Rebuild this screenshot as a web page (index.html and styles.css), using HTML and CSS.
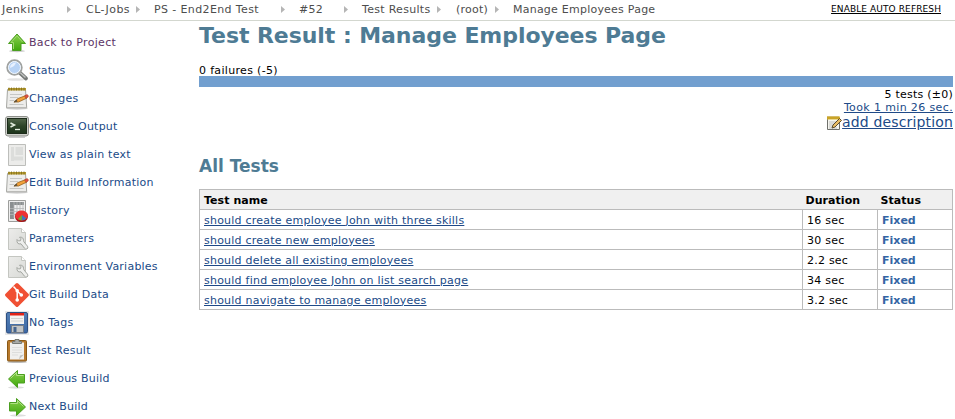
FILE: index.html
```html
<!DOCTYPE html>
<html lang="en">
<head>
<meta charset="utf-8">
<title>Test Result : Manage Employees Page</title>
<link rel="stylesheet" href="styles.css">
</head>
<body>
<svg class="defs" aria-hidden="true">
  <defs>
    <linearGradient id="green" x1="0" y1="0" x2="0" y2="1"><stop offset="0" stop-color="#8bd04e"/><stop offset="1" stop-color="#3fa80c"/></linearGradient>
    <linearGradient id="paper" x1="0" y1="0" x2="1" y2="1"><stop offset="0" stop-color="#ececea"/><stop offset="1" stop-color="#d9dad7"/></linearGradient>
    <linearGradient id="screen" x1="0" y1="0" x2="0" y2="1"><stop offset="0" stop-color="#52664a"/><stop offset=".5" stop-color="#2d4529"/><stop offset="1" stop-color="#1d341b"/></linearGradient>
    <linearGradient id="disk" x1="0" y1="0" x2="0" y2="1"><stop offset="0" stop-color="#547fb4"/><stop offset="1" stop-color="#3c68a5"/></linearGradient>
    <symbol id="notepad" viewBox="0 0 24 24">
      <ellipse cx="12" cy="21.500" rx="11" ry="1.200" fill="#d5d5d5"/>
      <path d="M2.500 2.500h18l1.200 18.300H1.500z" fill="#ededeb" stroke="#a5a6a2"/>
      <path d="M3 1h18v2.500H3z" fill="#b59a2e"/>
      <path d="M4 .5v3M6.500 .5v3M9 .5v3M11.500 .5v3M14 .5v3M16.500 .5v3M19 .5v3" stroke="#7b691e" stroke-width=".8"/>
      <path d="M5 7.500h12M5 10.500h8M4.500 13.500h5M4.500 17.500h14" stroke="#c6c7c5"/>
      <path d="M9 15l4-3.500 8-3 1 2.500-8.500 4z" fill="#f2a13a" stroke="#966019" stroke-width=".8"/>
      <path d="M8.500 15.500l3-3 1 2z" fill="#554f40"/>
      <path d="M19.500 8.800l2.500-1.300q2 .8 1.200 2.500l-2.300 1.300z" fill="#df5042" stroke="#a83a27" stroke-width=".5"/>
    </symbol>
    <symbol id="wrench-page" viewBox="0 0 24 24">
      <path d="M3.500 1.500h13l4 4v17h-17z" fill="url(#paper)" stroke="#c4c6c1"/>
      <path d="M16.500 1.500v4h4" fill="#fff" stroke="#c4c6c1"/>
      <path d="M12 12.500l1.500 1.500 2-.3.500-2-1.500-1.500q4-.5 4 3.500 0 1 1.500 2.500l2.500 3q1 2-.5 2.800-1.500.6-2.500-.8l-3.500-4.400q-4.500 1-4-4.300z" fill="#eeefed" stroke="#9c9f9a" stroke-width=".9"/>
    </symbol>
    <symbol id="right" viewBox="0 0 24 24">
      <ellipse cx="13" cy="20.500" rx="8" ry="1.200" fill="#dedede"/>
      <path d="M4.500 7.500h7v-4l9 8.500-9 8.500v-4.500h-7z" fill="url(#green)" stroke="#4b9f20"/>
      <path d="M5.500 8.500h7v-3l6 6" fill="none" stroke="#afe083"/>
    </symbol>
  </defs>
</svg>
<header class="bar">
  <nav class="crumbs">
    <a class="c1">Jenkins</a><i></i><a class="c2">CL-Jobs</a><i></i><a class="c3">PS - End2End Test</a><i></i><a class="c4">#52</a><i></i><a class="c5">Test Results</a><i></i><a class="c6">(root)</a><i></i><a class="c7">Manage Employees Page</a>
  </nav>
  <a class="refresh">ENABLE AUTO REFRESH</a>
</header>
<div class="page">
  <nav class="tasks">
    <a class="visited"><svg viewBox="0 0 24 24"><ellipse cx="12" cy="20" rx="8" ry="1.200" fill="#ccc"/><path d="M7.500 19.500v-7h-4l8.500-9.500 8.500 9.500h-4.500v7z" fill="url(#green)" stroke="#4b9f20"/><path d="M8.500 18v-6.500H6l6-6.700 5.500 6.200" fill="none" stroke="#9fd96e"/></svg><span>Back to Project</span></a>
    <a><svg viewBox="0 0 24 24"><ellipse cx="11" cy="20.500" rx="9" ry="1.300" fill="#e2e2e2"/><path d="M14.500 13.500l6.500 6" stroke="#777a78" stroke-width="3.800" stroke-linecap="round"/><path d="M15 13.500l5.500 5" stroke="#bfc1bf" stroke-width="1.500"/><circle cx="9.500" cy="8.500" r="7.200" fill="#b5d0f2" stroke="#a0a2a0" stroke-width="2"/><circle cx="9.500" cy="8.500" r="6" fill="#b8d3f5" stroke="#f4f8fd"/><path d="M5 9q0-5 6-5.500-1 4-6 5.500" fill="#e7f1ff"/></svg><span>Status</span></a>
    <a><svg><use href="#notepad"/></svg><span>Changes</span></a>
    <a><svg viewBox="0 0 24 24"><rect x=".5" y="1.500" width="23" height="19.500" rx="2.500" fill="#cfd1cc" stroke="#8e908b"/><rect x="2.500" y="3.500" width="19" height="15" fill="url(#screen)" stroke="#1c2b1a"/><path d="M5.500 8l4 2-4 2" fill="none" stroke="#e4eee0" stroke-width="1.500"/><path d="M10 14.500h5" stroke="#e4eee0" stroke-width="1.300"/><path d="M4 22h16" stroke="#bbb" stroke-width="1.500"/></svg><span>Console Output</span></a>
    <a><svg viewBox="0 0 24 24"><path d="M3.500 1.500h17v21h-17z" fill="#ececea" stroke="#bdbebb"/><path d="M6 4h3v14H6zM10.500 4H18v8h-7.500zM8 13.500h10v4H8z" fill="#dcdddb"/></svg><span>View as plain text</span></a>
    <a><svg><use href="#notepad"/></svg><span>Edit Build Information</span></a>
    <a><svg viewBox="0 0 24 24"><path d="M3.500 1.500h17v21h-17z" fill="#eee" stroke="#9d9e9c"/><path d="M5 3h14v3H5zM5 6h4v14H5z" fill="#8b8f90"/><path d="M5 9.500h14M5 12.500h14M5 15.500h14M9 3v16M12 3v16M15 3v16M18 3v16" stroke="#b4b6b6" stroke-width=".8"/><ellipse cx="16.500" cy="17.500" rx="6.500" ry="5.500" fill="#a91515"/><ellipse cx="16.500" cy="16.500" rx="6.300" ry="4.900" fill="#e33"/><path d="M17 16l-.5 5.500q3.500 0 5-2z" fill="#4277bc"/><path d="M17 16l-.5 5.500q-2-.2-3.500-1.400z" fill="#69b62d"/></svg><span>History</span></a>
    <a><svg><use href="#wrench-page"/></svg><span>Parameters</span></a>
    <a><svg><use href="#wrench-page"/></svg><span>Environment Variables</span></a>
    <a><svg viewBox="0 0 24 24"><path d="M10.800.6q1.200-1.200 2.400 0l10.200 10.200q1.200 1.200 0 2.400L13.200 23.400q-1.200 1.200-2.400 0L.6 13.200q-1.200-1.200 0-2.400z" fill="#f05033"/><path d="M8.500 3.500l3.700 4v9.500M12.200 8l4 4" fill="none" stroke="#fff" stroke-width="1.500"/><circle cx="12.200" cy="7.700" r="1.800" fill="#fff"/><circle cx="12.200" cy="17" r="1.800" fill="#fff"/><circle cx="16.300" cy="12" r="1.800" fill="#fff"/></svg><span>Git Build Data</span></a>
    <a><svg viewBox="0 0 24 24"><rect width="24" height="24" fill="#e8e8e8"/><rect x="1.500" y="1.500" width="21" height="20.500" rx="1.500" fill="url(#disk)" stroke="#2d4f82"/><path d="M5 2h14v11H5z" fill="#f3f3f1"/><path d="M5 2h14v2.500H5z" fill="#e22317"/><path d="M6 7.500h12M6 10h12" stroke="#d2d3d1"/><path d="M6.500 14.500h12v7h-12z" fill="#c1c4c5" stroke="#737b85"/><path d="M8.500 16h3v5h-3z" fill="#45658e"/></svg><span>No Tags</span></a>
    <a><svg viewBox="0 0 24 24"><ellipse cx="12" cy="23" rx="10" ry="1" fill="#bbb"/><rect x="2.500" y="1.500" width="19" height="20.500" rx="1" fill="#b7792c" stroke="#885816"/><path d="M5 3.500h14v17H5z" fill="#f0f0ee"/><path d="M7 8.500h10M7 11h10M7 13.500h10M7 16h6" stroke="#dddedc"/><path d="M14 20.500l1-4 4-1z" fill="#bfc0bd"/><path d="M7.500 4.500v-2h2.500v-2h4v2h2.500v2z" fill="#aaaca8" stroke="#777a75"/></svg><span>Test Result</span></a>
    <a><svg viewBox="0 0 24 24"><g transform="translate(24 0) scale(-1 1)"><use href="#right"/></g></svg><span>Previous Build</span></a>
    <a><svg><use href="#right"/></svg><span>Next Build</span></a>
  </nav>
  <main>
    <h1>Test Result : Manage Employees Page</h1>
    <div class="fail">0 failures (-5)</div>
    <div class="meter"></div>
    <div class="count">5 tests (±0)</div>
    <div class="took"><a>Took 1 min 26 sec.</a></div>
    <div class="desc"><svg viewBox="0 0 16 16"><path d="M1.500 2.500h12v12h-12z" fill="#f5f5ef" stroke="#6f706c"/><path d="M1 1.500h13v3H1z" fill="#dfba32"/><path d="M2 1v3M4 1v3M6 1v3M8 1v3M10 1v3M12 1v3" stroke="#a57c14" stroke-width=".7"/><path d="M3 7h7M3 9h5M3 11h4M3 13h8" stroke="#aaa" stroke-width=".7"/><path d="M6 13l1-3 6.500-6.500 2 2L9 12z" fill="#e9bd65" stroke="#5b4c30"/></svg><a>add description</a></div>
    <h2>All Tests</h2>
    <table>
      <thead><tr><th>Test name</th><th class="dur">Duration</th><th class="stat">Status</th></tr></thead>
      <tbody>
        <tr><td><a>should create employee John with three skills</a></td><td>16 sec</td><td><b>Fixed</b></td></tr>
        <tr><td><a>should create new employees</a></td><td>30 sec</td><td><b>Fixed</b></td></tr>
        <tr><td><a>should delete all existing employees</a></td><td>2.2 sec</td><td><b>Fixed</b></td></tr>
        <tr><td><a>should find employee John on list search page</a></td><td>34 sec</td><td><b>Fixed</b></td></tr>
        <tr><td><a>should navigate to manage employees</a></td><td>3.2 sec</td><td><b>Fixed</b></td></tr>
      </tbody>
    </table>
  </main>
</div>
</body>
</html>
```
FILE: styles.css
```css
* { box-sizing: border-box; }
html { overflow: hidden; }
body { margin: 0; height: 419px; overflow: hidden; background: #fff; color: #000; font: 11px/14px Verdana, "DejaVu Sans", sans-serif; letter-spacing: .23px; }
.defs { display: block; width: 0; height: 0; }
.bar { display: flex; justify-content: space-between; height: 21px; padding: 3px 14px 0 2px; border-bottom: 1px solid #d3d7cf; white-space: nowrap; }
.crumbs { display: flex; color: #4d4d4d; }
.crumbs i { width: 4px; height: 7px; margin-top: 3px; background: #b5b5b5; clip-path: polygon(0 0, 100% 50%, 0 100%); }
.c1 { width: 65px; letter-spacing: .45px; }
.c2 { width: 50px; letter-spacing: .45px; }
.c3 { width: 127px; letter-spacing: .38px; }
.c4 { width: 45px; }
.c5 { width: 75px; letter-spacing: .3px; }
.c6 { width: 39px; }
.crumbs i + a { margin-left: 15px; }
.crumbs i + .c3, .crumbs i + .c4, .crumbs i + .c5, .crumbs i + .c7 { margin-left: 14px; }
.refresh { margin-top: -1px; font-size: 9px; letter-spacing: .1px; text-decoration: underline; }
.page { display: flex; }
.tasks { width: 199px; height: 398px; padding: 8px 0 0 5px; color: #204a87; }
.tasks a { display: flex; align-items: center; height: 28px; }
.tasks svg { flex: none; width: 24px; height: 24px; }
.tasks span { white-space: nowrap; }
.tasks .visited { color: #5c3566; letter-spacing: .32px; }
main { flex: 1; padding-right: 2px; }
h1 { margin: 0; height: 42px; color: #4e7b94; font-size: 22px; line-height: 29px; letter-spacing: -.06px; white-space: nowrap; }
.fail { height: 13px; line-height: 16px; letter-spacing: .33px; }
.meter { height: 11px; background: #729fcf; }
.count { height: 13px; line-height: 16px; text-align: right; }
.took { height: 14px; line-height: 15px; letter-spacing: .37px; text-align: right; }
.desc { display: flex; justify-content: flex-end; height: 16px; font-size: 14px; line-height: 16px; letter-spacing: .15px; }
.desc svg { width: 16px; height: 16px; margin-top: 1px; }
main a { color: #204a87; text-decoration: underline; }
h2 { margin: 25px 0 0; height: 34px; color: #4e7b94; font-size: 17px; line-height: 22px; letter-spacing: 0; }
table { width: 754px; table-layout: fixed; border-collapse: collapse; border: 1px solid #bbb; }
tr { height: 20px; }
th { height: 20px; padding: 2px 4px 0; background: #f0f0f0; letter-spacing: .05px; text-align: left; }
.dur, .stat { width: 75px; padding-left: 3px; }
td { height: 20px; padding: 2px 4px 0; border: 1px solid #bbb; }
th, td { white-space: nowrap; line-height: 14px; }
b { color: #3465a4; letter-spacing: 0; }
```
